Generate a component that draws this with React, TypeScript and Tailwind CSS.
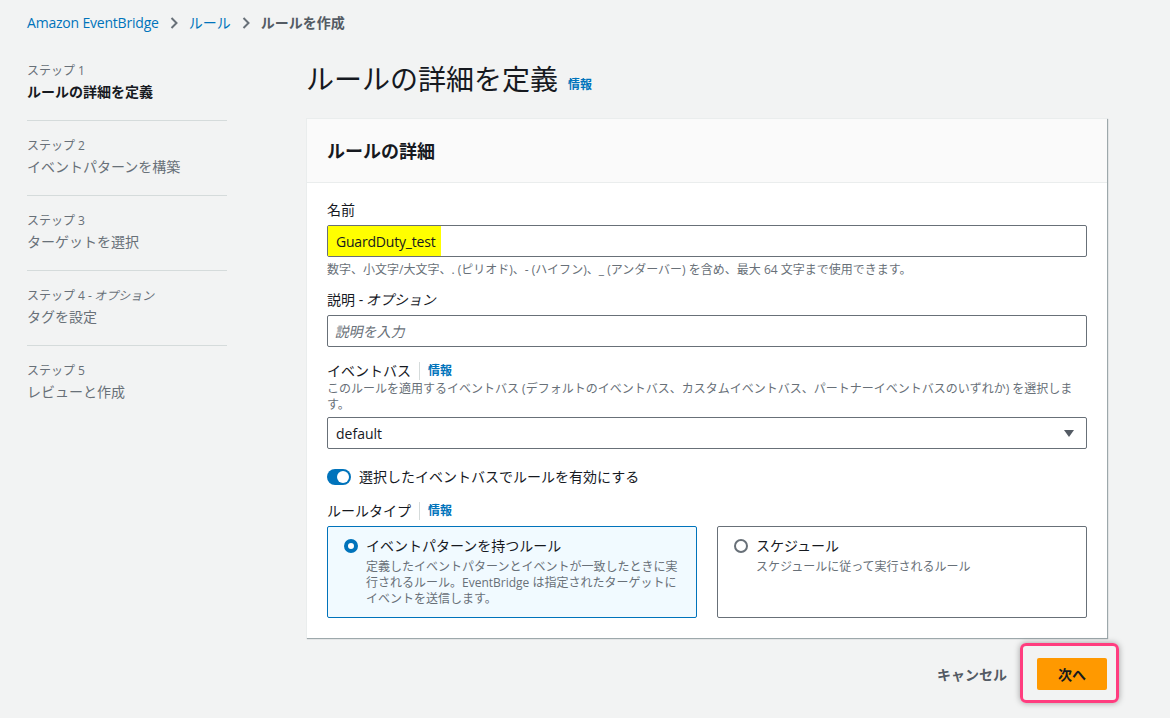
import React from "react";

const font = { fontFamily: '"Open Sans", "Noto Sans CJK JP", "Noto Sans", sans-serif' };

function Info() {
  return <span className="text-[12px] font-bold text-[#0073bb] leading-none">情報</span>;
}

function Slant({ children }: { children: React.ReactNode }) {
  return <span className="inline-block -skew-x-12">{children}</span>;
}

function LabelWithInfo({ label }: { label: string }) {
  return (
    <div className="flex items-center text-[14px] text-[#16191f] leading-[20px]">
      <span>{label}</span>
      <span className="mx-[8px] h-[18px] w-px bg-[#d5dbdb]" />
      <Info />
    </div>
  );
}

const steps = [
  { s: "ステップ 1", t: "ルールの詳細を定義", active: true },
  { s: "ステップ 2", t: "イベントパターンを構築" },
  { s: "ステップ 3", t: "ターゲットを選択" },
  { s: "ステップ 4", opt: true, t: "タグを設定" },
  { s: "ステップ 5", t: "レビューと作成" },
];

export default function App() {
  return (
    <div className="w-[1170px] h-[718px] bg-[#f2f3f3] overflow-hidden relative" style={font}>
      {/* breadcrumb */}
      <div className="flex items-center pl-[27px] pt-[12px] h-[22px] box-content text-[14px] leading-[20px]">
        <span className="text-[#0073bb] tracking-[-0.2px]">Amazon EventBridge</span>
        <svg className="mx-[10px]" width="10" height="14" viewBox="0 0 10 14"><path d="M2.5 2 L7.5 7 L2.5 12" fill="none" stroke="#687078" strokeWidth="2" /></svg>
        <span className="text-[#0073bb]">ルール</span>
        <svg className="mx-[10px]" width="10" height="14" viewBox="0 0 10 14"><path d="M2.5 2 L7.5 7 L2.5 12" fill="none" stroke="#687078" strokeWidth="2" /></svg>
        <span className="text-[#545b64] font-bold">ルールを作成</span>
      </div>

      <div className="flex mt-[26px]">
        {/* left nav */}
        <div className="w-[200px] ml-[27px] shrink-0 pt-[3px]">
          {steps.map((st, i) => (
            <div key={i} className={`${i > 0 ? "border-t border-[#d5dbdb] pt-[17px]" : ""} ${i < steps.length - 1 ? "pb-[18px]" : ""}`}>
              <div className="text-[12px] leading-[16px] text-[#687078]">
                {st.s}
                {st.opt && <span> - <Slant>オプション</Slant></span>}
              </div>
              <div className={`text-[14px] leading-[20px] mt-[3px] ${st.active ? "font-bold text-[#16191f]" : "text-[#687078]"}`}>{st.t}</div>
            </div>
          ))}
        </div>

        {/* main */}
        <div className="ml-[79px] w-[801px]">
          <div className="flex items-end h-[38px]">
            <h1 className="text-[28px] leading-[38px] text-[#16191f] font-normal">ルールの詳細を定義</h1>
            <span className="ml-[10px] mb-[3px]"><Info /></span>
          </div>

          <div className="mt-[20px] bg-white border-l border-t border-[#eaeded] shadow-[1px_1px_1px_0_rgba(0,28,36,0.35)]">
            <div className="h-[64px] bg-[#fafafa] border-b border-[#eaeded] flex items-center px-[20px]">
              <h2 className="text-[18px] font-bold text-[#16191f] leading-[22px]">ルールの詳細</h2>
            </div>
            <div className="px-[20px] pt-[17px] pb-[20px]">
              {/* name */}
              <div className="text-[14px] leading-[20px] text-[#16191f]">名前</div>
              <div className="mt-[5px] h-[32px] border border-[#687078] rounded-[2px] flex items-center w-[760px]">
                <div className="h-full bg-[#ffff00] flex items-center pl-[8px] pr-[6px] text-[14px] text-[#16191f] tracking-[-0.2px]">GuardDuty_test</div>
              </div>
              <div className="mt-[5px] text-[12px] leading-[16px] text-[#687078]">数字、小文字/大文字、. (ピリオド)、- (ハイフン)、_ (アンダーバー) を含め、最大 64 文字まで使用できます。</div>

              {/* description */}
              <div className="mt-[12px] text-[14px] leading-[20px] text-[#16191f]">説明 - <Slant>オプション</Slant></div>
              <div className="mt-[5px] h-[32px] border border-[#687078] rounded-[2px] flex items-center px-[8px] w-[760px]">
                <span className="text-[14px] text-[#687078]"><Slant>説明を入力</Slant></span>
              </div>

              {/* event bus */}
              <div className="mt-[14px]"><LabelWithInfo label="イベントバス" /></div>
              <div className="text-[12px] leading-[16px] text-[#687078] w-[760px] pr-[6px]">このルールを適用するイベントバス (デフォルトのイベントバス、カスタムイベントバス、パートナーイベントバスのいずれか) を選択します。</div>
              <div className="mt-[4px] h-[32px] border border-[#687078] rounded-[2px] flex items-center justify-between px-[8px] w-[760px]">
                <span className="text-[14px] text-[#16191f]">default</span>
                <svg width="12" height="10" viewBox="0 0 12 10" className="mr-[3px]"><path d="M1 2 L11 2 L6 9 Z" fill="#545b64" /></svg>
              </div>

              {/* toggle */}
              <div className="mt-[18px] flex items-center">
                <div className="w-[24px] h-[16px] rounded-full bg-[#0073bb] relative">
                  <div className="absolute right-[2px] top-[2px] w-[12px] h-[12px] rounded-full bg-white" />
                </div>
                <span className="ml-[8px] text-[14px] leading-[20px] text-[#16191f]">選択したイベントバスでルールを有効にする</span>
              </div>

              {/* rule type */}
              <div className="mt-[14px]"><LabelWithInfo label="ルールタイプ" /></div>
              <div className="mt-[5px] grid grid-cols-2 gap-[20px] w-[760px]">
                <div className="h-[92px] border border-[#0073bb] rounded-[2px] bg-[#f1faff] flex pt-[9px] pl-[16px] pr-[16px]">
                  <div className="mt-[3px] w-[14px] h-[14px] rounded-full border-[4px] border-[#0073bb] bg-white shrink-0" />
                  <div className="ml-[8px]">
                    <div className="text-[14px] leading-[20px] text-[#16191f]">イベントパターンを持つルール</div>
                    <div className="mt-[3px] text-[12px] leading-[16px] text-[#687078]">定義したイベントパターンとイベントが一致したときに実行されるルール。EventBridge は指定されたターゲットにイベントを送信します。</div>
                  </div>
                </div>
                <div className="h-[92px] border border-[#687078] rounded-[2px] bg-white flex pt-[9px] pl-[16px] pr-[16px]">
                  <div className="mt-[3px] w-[14px] h-[14px] rounded-full border-[2px] border-[#687078] bg-white shrink-0" />
                  <div className="ml-[8px]">
                    <div className="text-[14px] leading-[20px] text-[#16191f]">スケジュール</div>
                    <div className="mt-[3px] text-[12px] leading-[16px] text-[#687078]">スケジュールに従って実行されるルール</div>
                  </div>
                </div>
              </div>
            </div>
          </div>

          {/* actions */}
          <div className="flex justify-end items-center mt-[20px]">
            <span className="text-[14px] font-bold text-[#545b64] mr-[30px]">キャンセル</span>
            <div className="relative">
              <div className="absolute -left-[17px] -top-[15px] w-[99px] h-[60px] border-[3px] border-[#ff3d7f] rounded-[6px] shadow-[0_0_6px_rgba(0,0,0,0.35)]" />
              <div className="w-[70px] h-[32px] bg-[#ff9900] flex items-center justify-center text-[14px] font-bold text-[#16191f] rounded-[2px]">次へ</div>
            </div>
          </div>
        </div>
      </div>
    </div>
  );
}
